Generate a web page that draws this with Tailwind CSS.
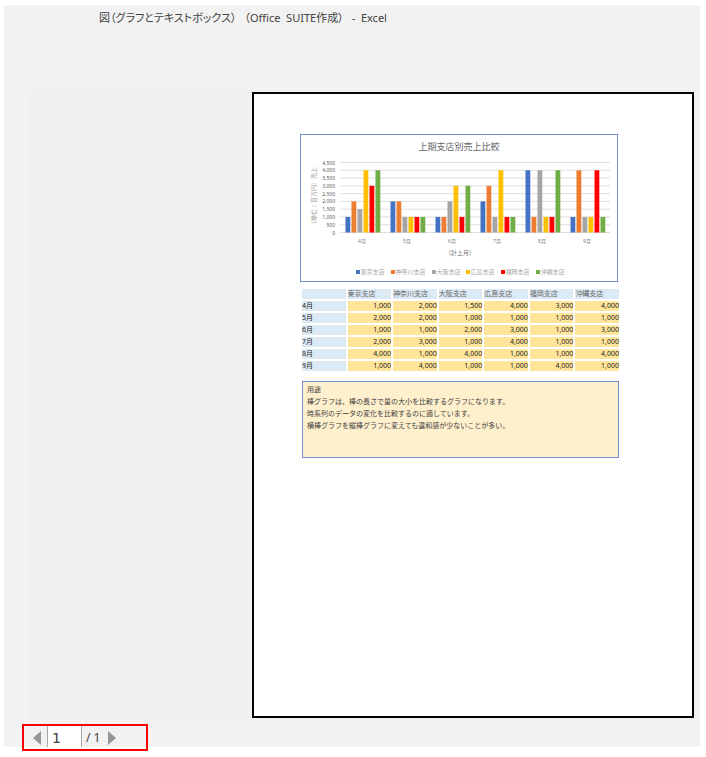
<!DOCTYPE html>
<html lang="ja">
<head>
<meta charset="utf-8">
<meta name="viewport" content="width=device-width, initial-scale=1">
<title>図（グラフとテキストボックス） - Excel</title>
<script src="https://cdn.jsdelivr.net/npm/@tailwindcss/browser@4"></script>
</head>
<body class="bg-white font-['Noto_Sans','Noto_Sans_CJK_JP',sans-serif]">
<div class="relative pt-[5px] pl-1 pr-[6px] pb-[10px]">
  <div class="bg-[#f2f2f2]">
    <header class="h-[84px] pt-1 pl-[95px]">
      <h1 class="flex gap-2 whitespace-nowrap text-[11px] leading-[18px] text-[#404040] [font-feature-settings:'palt']"><span>図（グラフとテキストボックス）</span><span>（Office&nbsp; SUITE作成）</span><span>-&nbsp; Excel</span></h1>
    </header>
    <main class="ml-6 mr-1 bg-[#f0f0f0] pt-[3px] pb-[2px] pr-[2px] pl-[224px]">
      <article class="min-h-[626px] border-2 border-black bg-white pt-10 pl-[46px] pr-[74px]">
        <figure class="border border-[#6f8fcf]">
          <svg id="chart" viewBox="301 135 316 146" class="block w-full font-['Noto_Sans','Noto_Sans_CJK_JP',sans-serif]" role="img" aria-label="上期支店別売上比較"></svg>
        </figure>
        <div class="mt-[5px] -mr-[3px]">
          <table class="w-full table-fixed border-separate border-spacing-[2px] text-[7px] leading-[10px] text-[#222222]">
            <thead id="head"></thead>
            <tbody id="body"></tbody>
          </table>
        </div>
        <section class="mt-2 ml-[2px] -mr-px min-h-[77px] border border-[#7191c8] bg-[#fff0cd] px-1 pt-[2px] text-[7px] leading-[12px] whitespace-nowrap text-[#404040]">
          <p>用途</p>
          <p>棒グラフは、棒の長さで量の大小を比較するグラフになります。</p>
          <p>時系列のデータの変化を比較するのに適しています。</p>
          <p>横棒グラフを縦棒グラフに変えても違和感が少ないことが多い。</p>
        </section>
      </article>
    </main>
    <footer class="flex h-[27px] items-start pl-[18px] pt-1">
      <nav aria-label="ページ" class="z-10 flex h-[27px] w-[126px] items-stretch border-2 border-[#ff0000] text-[12px] text-[#404040]">
        <button type="button" aria-label="前のページ" class="flex w-[22px] items-center justify-center pl-1"><svg viewBox="0 0 8 14" class="h-[14px] w-2"><path d="M8 0V14L0 7Z" fill="#969696"/></svg></button>
        <input aria-label="ページ番号" value="1" class="mb-[2px] ml-px w-[35px] border-x border-t-0 border-x-[#a6a6a6] bg-white pt-[3px] pl-1 font-['DejaVu_Sans'] text-[14px]">
        <span class="pl-1 leading-[23px]">/ 1</span>
        <button type="button" aria-label="次のページ" class="ml-2 flex items-center"><svg viewBox="0 0 8 14" class="h-[14px] w-2"><path d="M0 0V14L8 7Z" fill="#969696"/></svg></button>
      </nav>
    </footer>
  </div>
</div>
<script>
const branches = ['東京支店','神奈川支店','大阪支店','広島支店','福岡支店','沖縄支店'];
const colors = ['#4472c4','#ed7d31','#a5a5a5','#ffc000','#ff0000','#70ad47'];
const sales = [[1000,2000,1500,4000,3000,4000],[2000,2000,1000,1000,1000,1000],[1000,1000,2000,3000,1000,3000],[2000,3000,1000,4000,1000,1000],[4000,1000,4000,1000,1000,4000],[1000,4000,1000,1000,4000,1000]];
const fmt = n => n.toLocaleString('en-US');
const text = (x, y, s, size, fill, anchor) => `<text x="${x}" y="${y}" font-size="${size}" fill="${fill}" text-anchor="${anchor}">${s}</text>`;
let out = text(459, 150, '上期支店別売上比較', 9, '#666', 'middle');
for (let v = 0; v <= 4500; v += 500) {
  const y = 232.5 - v * 70 / 4500;
  out += `<path d="M340 ${y}H610" stroke="#dedede"/>` + text(335, y + 2, fmt(v), 5, '#595959', 'end');
}
sales.forEach((row, m) => {
  row.forEach((v, b) => {
    const h = v * 70 / 4500;
    out += `<rect x="${345.5 + m * 45 + b * 6}" y="${232.5 - h}" width="4.8" height="${h}" fill="${colors[b]}"/>`;
  });
  out += text(362 + m * 45, 243, (m + 4) + '月', 5, '#808080', 'middle');
});
out += text(460, 255, '（計上月）', 6, '#777', 'middle');
out += '<text transform="translate(316 197) rotate(-90)" font-size="6" fill="#999" text-anchor="middle">（単位：百万円）売上</text>';
[356, 391, 432, 466, 501, 536].forEach((x, i) => {
  out += `<rect x="${x}" y="270" width="4" height="4" fill="${colors[i]}"/>` + text(x + 4.5, 274, branches[i], 6, '#a6a6a6', 'start');
});
document.getElementById('chart').innerHTML = out;
document.getElementById('head').innerHTML = '<tr><th class="bg-[#dceaf6] p-0 h-[10px]"></th>' + branches.map(b => `<th scope="col" class="h-[10px] whitespace-nowrap bg-[#dceaf6] p-0 text-left font-normal text-[#666666]">${b}</th>`).join('') + '</tr>';
document.getElementById('body').innerHTML = sales.map((r, i) => `<tr><th scope="row" class="bg-[#dceaf6] p-0 text-left font-normal">${i + 4}月</th>` + r.map(v => `<td class="bg-[#ffe599] p-0 text-right">${fmt(v)}</td>`).join('') + '</tr>').join('');
</script>
</body>
</html>
